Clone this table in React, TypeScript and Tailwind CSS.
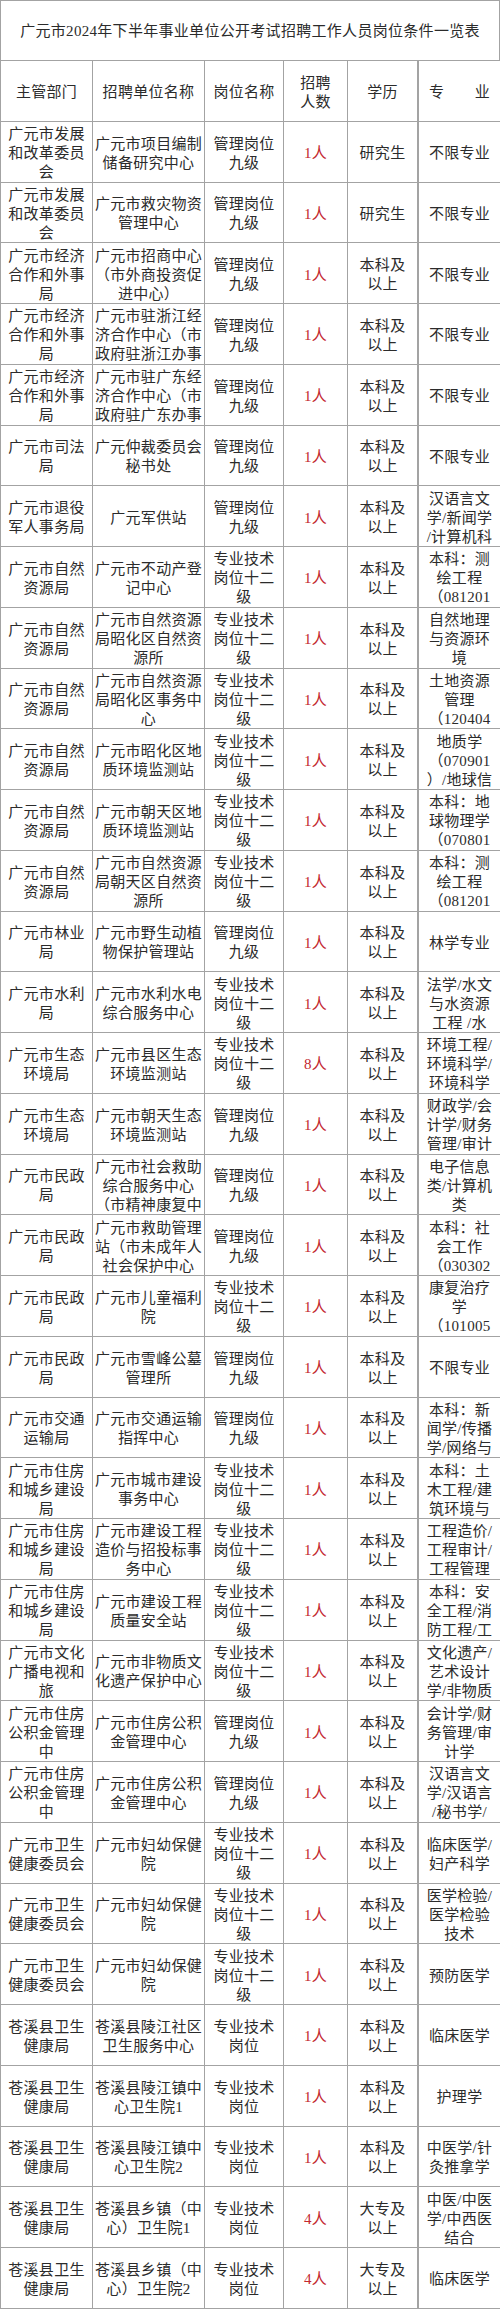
const rows: string[][] = [
  ["广元市发展\n和改革委员\n会", "广元市项目编制\n储备研究中心", "管理岗位\n九级", "1人", "研究生", "不限专业"],
  ["广元市发展\n和改革委员\n会", "广元市救灾物资\n管理中心", "管理岗位\n九级", "1人", "研究生", "不限专业"],
  ["广元市经济\n合作和外事\n局", "广元市招商中心\n（市外商投资促\n进中心）", "管理岗位\n九级", "1人", "本科及\n以上", "不限专业"],
  ["广元市经济\n合作和外事\n局", "广元市驻浙江经\n济合作中心（市\n政府驻浙江办事", "管理岗位\n九级", "1人", "本科及\n以上", "不限专业"],
  ["广元市经济\n合作和外事\n局", "广元市驻广东经\n济合作中心（市\n政府驻广东办事", "管理岗位\n九级", "1人", "本科及\n以上", "不限专业"],
  ["广元市司法\n局", "广元仲裁委员会\n秘书处", "管理岗位\n九级", "1人", "本科及\n以上", "不限专业"],
  ["广元市退役\n军人事务局", "广元军供站", "管理岗位\n九级", "1人", "本科及\n以上", "汉语言文\n学/新闻学\n/计算机科"],
  ["广元市自然\n资源局", "广元市不动产登\n记中心", "专业技术\n岗位十二\n级", "1人", "本科及\n以上", "本科：测\n绘工程\n（081201"],
  ["广元市自然\n资源局", "广元市自然资源\n局昭化区自然资\n源所", "专业技术\n岗位十二\n级", "1人", "本科及\n以上", "自然地理\n与资源环\n境"],
  ["广元市自然\n资源局", "广元市自然资源\n局昭化区事务中\n心", "专业技术\n岗位十二\n级", "1人", "本科及\n以上", "土地资源\n管理\n（120404"],
  ["广元市自然\n资源局", "广元市昭化区地\n质环境监测站", "专业技术\n岗位十二\n级", "1人", "本科及\n以上", "地质学\n（070901\n）/地球信"],
  ["广元市自然\n资源局", "广元市朝天区地\n质环境监测站", "专业技术\n岗位十二\n级", "1人", "本科及\n以上", "本科：地\n球物理学\n（070801"],
  ["广元市自然\n资源局", "广元市自然资源\n局朝天区自然资\n源所", "专业技术\n岗位十二\n级", "1人", "本科及\n以上", "本科：测\n绘工程\n（081201"],
  ["广元市林业\n局", "广元市野生动植\n物保护管理站", "管理岗位\n九级", "1人", "本科及\n以上", "林学专业"],
  ["广元市水利\n局", "广元市水利水电\n综合服务中心", "专业技术\n岗位十二\n级", "1人", "本科及\n以上", "法学/水文\n与水资源\n工程 /水"],
  ["广元市生态\n环境局", "广元市县区生态\n环境监测站", "专业技术\n岗位十二\n级", "8人", "本科及\n以上", "环境工程/\n环境科学/\n环境科学"],
  ["广元市生态\n环境局", "广元市朝天生态\n环境监测站", "管理岗位\n九级", "1人", "本科及\n以上", "财政学/会\n计学/财务\n管理/审计"],
  ["广元市民政\n局", "广元市社会救助\n综合服务中心\n（市精神康复中", "管理岗位\n九级", "1人", "本科及\n以上", "电子信息\n类/计算机\n类"],
  ["广元市民政\n局", "广元市救助管理\n站（市未成年人\n社会保护中心", "管理岗位\n九级", "1人", "本科及\n以上", "本科：社\n会工作\n（030302"],
  ["广元市民政\n局", "广元市儿童福利\n院", "专业技术\n岗位十二\n级", "1人", "本科及\n以上", "康复治疗\n学\n（101005"],
  ["广元市民政\n局", "广元市雪峰公墓\n管理所", "管理岗位\n九级", "1人", "本科及\n以上", "不限专业"],
  ["广元市交通\n运输局", "广元市交通运输\n指挥中心", "管理岗位\n九级", "1人", "本科及\n以上", "本科：新\n闻学/传播\n学/网络与"],
  ["广元市住房\n和城乡建设\n局", "广元市城市建设\n事务中心", "专业技术\n岗位十二\n级", "1人", "本科及\n以上", "本科：土\n木工程/建\n筑环境与"],
  ["广元市住房\n和城乡建设\n局", "广元市建设工程\n造价与招投标事\n务中心", "专业技术\n岗位十二\n级", "1人", "本科及\n以上", "工程造价/\n工程审计/\n工程管理"],
  ["广元市住房\n和城乡建设\n局", "广元市建设工程\n质量安全站", "专业技术\n岗位十二\n级", "1人", "本科及\n以上", "本科：安\n全工程/消\n防工程/工"],
  ["广元市文化\n广播电视和\n旅", "广元市非物质文\n化遗产保护中心", "专业技术\n岗位十二\n级", "1人", "本科及\n以上", "文化遗产/\n艺术设计\n学/非物质"],
  ["广元市住房\n公积金管理\n中", "广元市住房公积\n金管理中心", "管理岗位\n九级", "1人", "本科及\n以上", "会计学/财\n务管理/审\n计学"],
  ["广元市住房\n公积金管理\n中", "广元市住房公积\n金管理中心", "管理岗位\n九级", "1人", "本科及\n以上", "汉语言文\n学/汉语言\n/秘书学/"],
  ["广元市卫生\n健康委员会", "广元市妇幼保健\n院", "专业技术\n岗位十二\n级", "1人", "本科及\n以上", "临床医学/\n妇产科学"],
  ["广元市卫生\n健康委员会", "广元市妇幼保健\n院", "专业技术\n岗位十二\n级", "1人", "本科及\n以上", "医学检验/\n医学检验\n技术"],
  ["广元市卫生\n健康委员会", "广元市妇幼保健\n院", "专业技术\n岗位十二\n级", "1人", "本科及\n以上", "预防医学"],
  ["苍溪县卫生\n健康局", "苍溪县陵江社区\n卫生服务中心", "专业技术\n岗位", "1人", "本科及\n以上", "临床医学"],
  ["苍溪县卫生\n健康局", "苍溪县陵江镇中\n心卫生院1", "专业技术\n岗位", "1人", "本科及\n以上", "护理学"],
  ["苍溪县卫生\n健康局", "苍溪县陵江镇中\n心卫生院2", "专业技术\n岗位", "1人", "本科及\n以上", "中医学/针\n灸推拿学"],
  ["苍溪县卫生\n健康局", "苍溪县乡镇（中\n心）卫生院1", "专业技术\n岗位", "4人", "大专及\n以上", "中医/中医\n学/中西医\n结合"],
  ["苍溪县卫生\n健康局", "苍溪县乡镇（中\n心）卫生院2", "专业技术\n岗位", "4人", "大专及\n以上", "临床医学"],
]

const header = ["主管部门", "招聘单位名称", "岗位名称", "招聘\n人数", "学历", "专　　业"]

function Cell({ text, col, red }: { text: string; col: number; red?: boolean }) {
  return (
    <div
      className={`flex items-center justify-center overflow-hidden border-b border-[#a3a3a3] pt-1 text-center whitespace-pre leading-[19px] ${
        col === 4 ? "border-r-2" : "border-r"
      } ${red ? "text-[#c3272f]" : "text-[#2b2b2b]"}`}
    >
      {text}
    </div>
  )
}

export default function App() {
  return (
    <div className="w-[500px] bg-white font-['Liberation_Serif','Noto_Sans_CJK_SC',serif] text-[15px] tracking-[0.3px]">
      {/* Title */}
      <div className="flex h-[61px] items-center justify-center border border-[#a3a3a3] pt-0.5 text-[#2b2b2b]">
        广元市2024年下半年事业单位公开考试招聘工作人员岗位条件一览表
      </div>

      <div className="grid auto-rows-[60.75px] grid-cols-[92px_112px_79px_64px_71px_82px] border-l border-[#a3a3a3]">
        {header.map((h, i) => (
          <Cell key={`h${i}`} text={h} col={i} />
        ))}
        {rows.map((row, r) =>
          row.map((cell, c) => <Cell key={`${r}-${c}`} text={cell} col={c} red={c === 3} />)
        )}
      </div>
    </div>
  )
}
